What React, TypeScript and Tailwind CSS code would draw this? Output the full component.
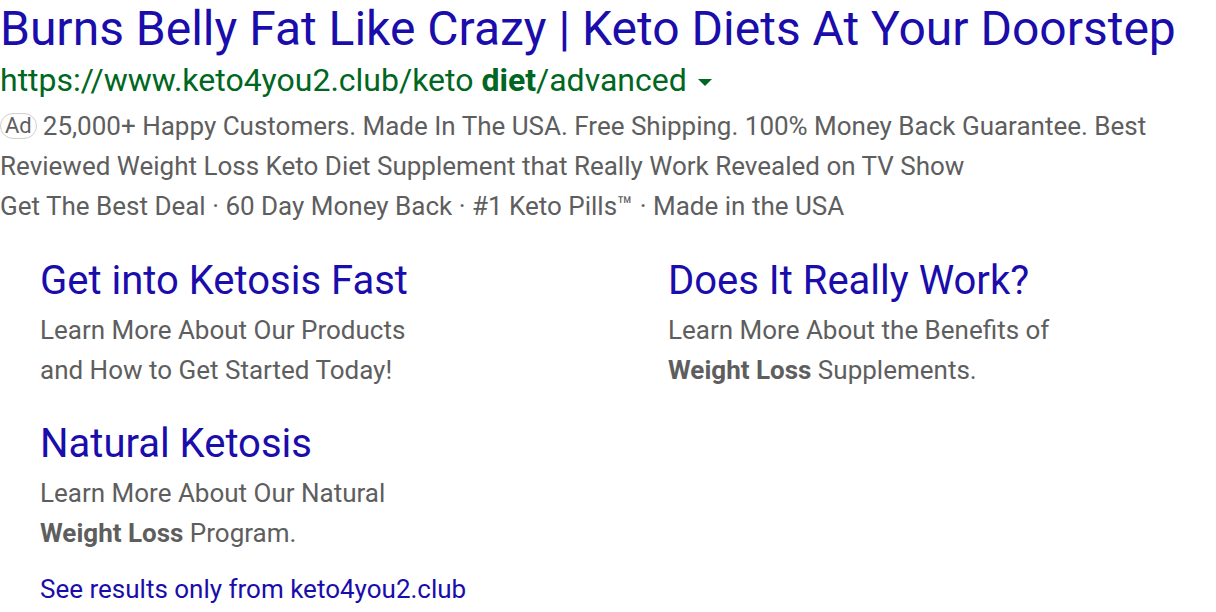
const sitelinks = [
  {
    title: 'Get into Ketosis Fast',
    lines: [<>Learn More About Our Products</>, <>and How to Get Started Today!</>],
  },
  {
    title: 'Does It Really Work?',
    lines: [
      <>Learn More About the Benefits of</>,
      <>
        <b className="font-bold">Weight Loss</b> Supplements.
      </>,
    ],
  },
  {
    title: 'Natural Ketosis',
    lines: [
      <>Learn More About Our Natural</>,
      <>
        <b className="font-bold">Weight Loss</b> Program.
      </>,
    ],
  },
];

function App() {
  return (
    <div className="min-h-screen bg-white font-['Roboto',sans-serif] overflow-hidden">
      {/* headline */}
      <h1 className="text-[48px] leading-[57px] text-[#1a0dab] whitespace-nowrap">
        Burns Belly Fat Like Crazy | Keto Diets At Your Doorstep
      </h1>

      {/* url */}
      <div className="flex items-center text-[32px] leading-[46px] text-[#006621] whitespace-nowrap">
        <span>
          https://www.keto4you2.club/keto <b className="font-bold">diet</b>/advanced
        </span>
        <span className="ml-[11px] mt-[4px] w-0 h-0 border-l-[7px] border-r-[7px] border-t-[7px] border-l-transparent border-r-transparent border-t-[#006621]" />
      </div>

      {/* description */}
      <div className="mt-[3px] text-[26px] leading-[40px] text-[#5e5e5e] whitespace-nowrap">
        <div className="flex items-center">
          <span className="mr-[6px] inline-flex items-center h-[26px] px-[4px] border border-[#cfcfcf] rounded-full text-[22px] leading-none">
            Ad
          </span>
          25,000+ Happy Customers. Made In The USA. Free Shipping. 100% Money Back Guarantee. Best
        </div>
        <div>Reviewed Weight Loss Keto Diet Supplement that Really Work Revealed on TV Show</div>
        <div>Get The Best Deal · 60 Day Money Back · #1 Keto Pills™ · Made in the USA</div>
      </div>

      {/* sitelinks */}
      <div className="grid grid-cols-[628px_1fr] pl-[40px] mt-[26px] gap-y-[25px]">
        {sitelinks.map((s) => (
          <div key={s.title}>
            <div className="text-[40px] leading-[58px] text-[#1a0dab] whitespace-nowrap">{s.title}</div>
            <div className="text-[26px] leading-[40px] text-[#5e5e5e] whitespace-nowrap">
              {s.lines.map((l, i) => (
                <div key={i}>{l}</div>
              ))}
            </div>
          </div>
        ))}
      </div>

      <div className="pl-[40px] mt-[16px] text-[26px] leading-[40px] text-[#1a0dab]">
        See results only from keto4you2.club
      </div>
    </div>
  );
}

export default App;
